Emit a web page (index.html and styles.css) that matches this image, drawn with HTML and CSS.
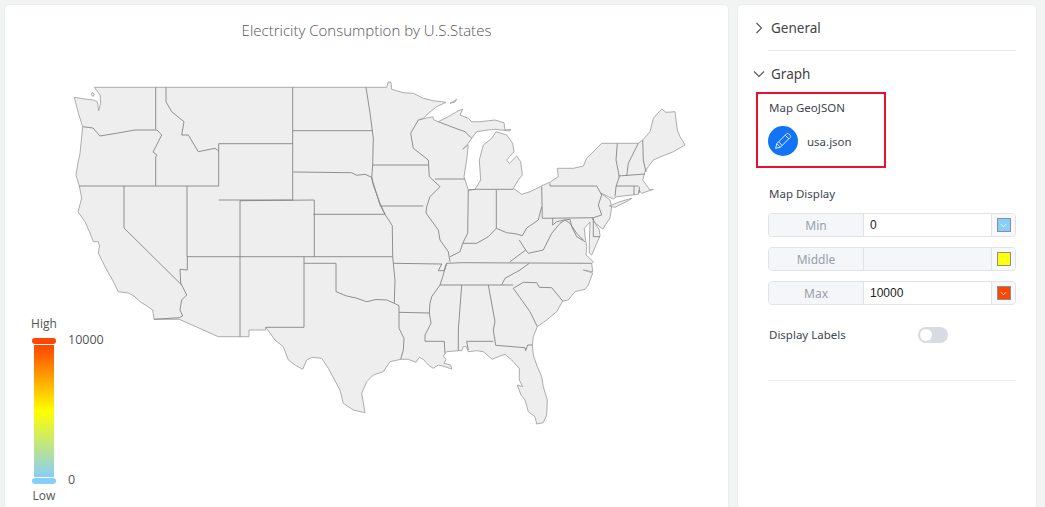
FILE: index.html
```html
<!DOCTYPE html>
<html lang="en">
<head>
<meta charset="utf-8">
<title>Electricity Consumption by U.S.States</title>
<link rel="stylesheet" href="styles.css">
</head>
<body>
<main class="page">
  <section class="chart-card">
    <h1 class="chart-title">Electricity Consumption by U.S.States</h1>
    <svg class="map" viewBox="5 5 723 510" aria-label="Map of the United States">
      <path class="land" d="M94.3 87.3L366 87.3L386.7 87.3L388.3 81.7L391 82.7L391.7 89.3L403.3 92.7L413.3 93.3L423.3 98.3L433.3 100.7L446 102.3L436.7 106.7L428.3 113.3L423.3 118.3L418.3 120L432.7 116.7L434 120L438.3 121.7L448.3 116.7L458.3 110.7L462.7 109.3L460 115L468.3 118.3L471.7 121.7L480 121.7L495 120L504 122.7L505 130L510.7 129.3L510 131L495 129.3L488.3 130L476.7 131.7L471.7 138.3L468.3 143.3L462.7 149.3L468.3 145L466.7 160L464 176.7L468.3 190L475 189.3L480.7 180L479.3 160L483.3 145L491.7 138.3L496 131.7L506.7 135L512.7 143.3L514 151.7L506.7 160L509.3 163.3L516.7 156L520.7 161.7L522.3 175L518.3 180L513.3 188.3L521.7 194.3L530 191.7L541.7 186L550.7 181.7L558.3 176.7L557.3 168.3L573.3 168.3L583.3 166L586.7 158.3L601.7 143.3L638.3 143.3L642.7 140L650 131.7L653.3 118.3L661.7 109L666 112.3L675 111.7L677.3 130L680 136.7L685 145L673.3 151.7L665 155L653.3 160L648.3 166.7L645 171.7L642.7 180L650 190L653.3 189.3L641.7 193.3L639 190L638.3 194.3L616.7 196.7L613.3 199L600.7 193L610 200L611.7 206.7L610 218L602.7 229L595 223L592.3 218.3L599.3 230L600 236L596 245L591.7 255L589.3 253L589.3 241.7L590 222L584.3 228.3L585 236.7L586.7 246.7L586 255L593.3 261.7L591.7 263.3L592.7 271.7L583.3 270L592.7 273L588.3 285L585 289.3L575 291.7L568.3 300L562.7 301L556.7 311.7L546.7 320L537.3 326.7L533.3 336.7L532.3 345L533.3 355L536.7 365L541.7 376.7L543.3 386.7L547.3 400L546.7 415L543.3 422.7L536.7 424L535 416.7L528.3 411.7L525 400L521 395L517.3 385L522.7 386.7L519.3 380L519.3 368.3L511.7 360L505 354.3L498.3 356.7L492.3 359.3L483.3 351.7L476.7 350.7L468.3 351.7L466 346.7L463.3 346.7L461.7 350.7L458.3 350.7L446.7 351.7L443.3 356L446 359.3L444 363.3L450.7 365L451.7 369L445 366.7L438.3 365L433.3 368.3L428.3 365L423.3 359.3L419.3 357.3L416 362.3L408.3 359.3L400.7 359.3L390 361.7L383.3 371.7L373.3 375L366.7 381.7L361.7 393.3L365 412.7L353.3 410L343.3 403.3L340 390L328.3 368.3L321.7 358.3L311.7 357.3L306.7 360L302.7 369.3L296.7 366L288.3 360L283.3 346.7L275 340L265.7 327.3L265.7 330L249 330L249 336.7L218.3 336.7L179.3 319.3L154 319.3L152.7 310L147 306L140 301.7L134 296L128.3 293L118.3 291.7L113 281L105 266.7L98.3 253L99.5 246L98.3 241.7L93.3 241.7L90 233L85 221.7L78 212L81.7 198L79.3 186L76 175L78 163L80 153.3L82.7 126.7L78.3 113L74.3 97.3L85 99L93.3 100L97.3 101.7L98.7 110.7L100.7 103L100 95Z"/>
      <path class="land" d="M609.3 206L620 201.7L631.7 198.3L628.3 200.7L615 207.3Z"/>
      <path class="land" d="M450 103.3L456.7 99.3L455 102Z"/>
      <path class="land" d="M92 92.5L94.5 94L93 96.5L91.5 94.5Z"/>
      <path class="borders" d="M155.7 87.3V129.5M82.7 126.7L93 128L100 136L118 133L135 130L157 130L161.7 135L153 152L157 155L155.7 157V186M79.3 186H218.7M124 186V228L181.7 285M187 186V256.7M187.3 256.7V270L180 269.3L180.7 283L186.7 295L181.7 300L180 310L182.7 316L179.3 317.7L154 319.3M240 200.7V336.7M187 256.7H392.7M304 256.7V327.3H265.7M304 263.3H336V291.7L346.7 296L356 298L366.7 301.7L376 299.5L386.7 300L394.3 303.3L399 305.7M392.7 256.7L393.3 263.3L395 280L394.3 303.3M399 305.7V328.3L404 338.3L403.3 350L400.7 359.3M399 312.3L429.3 313M393.3 263.3L441.7 264L438.3 270.7H444L446.7 263.3L442.7 276.7L440 285L431.7 296.7L430 303.3L429.3 313L431 323.3L425 335V341.3H444.3L445 353.3M446.7 263.3L462.7 262.7L591.7 263.3M440 285H513.3M501.7 285L505 278.3L520 270L529.3 263.3M461.7 285L458.3 330V350.7M488.3 285L495 321.7L493.3 330L495.7 345.3L525 347.7L525.7 350.7L527.7 345H532.3M466.7 341.3H493.3M466.7 341.3L468.3 350M513.3 288.3L530 311.7L537.3 326.7M513.3 288.3L523.3 282.3L536.7 282.7L539.3 287.3L551.7 287.7L562.7 301M366 87.3L370 113L373.3 138L372.7 165M372.7 165H428.3M292.7 87.3V200M292.7 130.7H372.3M218.7 143.7H292.7M218.7 143.7V186M218.7 200H293M293.3 172L351.7 172.7L356.7 175.3L365 174.3L371.7 177.3L373.3 185L380 203.3L385 214.3M313.3 214.3H385M240 200.7L314.3 200V256.7M166 87.3V101.7L171.7 111.7L184 121.7L181.7 135L188.3 135L198.3 151.7L215 148.3L218.7 151M418.3 120L410.7 133.3L413.3 148.3L428.3 160L429.3 176.7L440 186.7L430 196.7L426.7 206.7L426 213L438.3 230L440 240L448.3 251.7L450 261.7M438.3 121.7L452 127L465 131.7L471.7 138.3M435 179H465M380.7 206H423.3M372.7 165L371.7 178L380 205L385 214.3L392.3 225.7L392.7 256.7M468.3 190L467.7 233.3L462.7 243.3L460 251.7L450 256.7M496.3 190V228.3M468.3 190L476.7 189.3L513.3 189.3M541.7 186.7L542.3 218.3M462.7 243.3H476.7L488.3 236.7L496.3 228.3L506.7 232.7L516.7 234L522.3 235.7L526.7 228L538.3 220L541.7 206.7M519.3 240L525.7 250L528.3 253.3L543.3 250L551.7 233.3L560 223.3L565 220L570 223.3L576.7 233.3L583.3 240M525.7 250L510 261.7M552.7 218.3V225L556.7 221.7L564 220L570 219.3L571.7 226.7L576.7 236.7L585 241.7M542.3 218.3L593.3 217.7M550 183.3V186H596.7L601.7 195L598.3 205L601.7 215L593.3 217.7V236.7H600M617.3 143.3L616 160L619.3 176.7L616 186.7L615 196.5M638.3 143.3L628.3 163.3L626.7 176M642.7 140L643.3 160L646 172M618.3 176L645 174M616 186H638.3M634 186V195M639.3 186.7V193"/>
    </svg>
    <div class="legend">
      <span class="legend-end">High</span>
      <div class="legend-scale">
        <div class="scale-column">
          <i class="cap cap-high"></i>
          <i class="ramp"></i>
          <i class="cap cap-low"></i>
        </div>
        <div class="scale-values">
          <span>10000</span>
          <span>0</span>
        </div>
      </div>
      <span class="legend-end">Low</span>
    </div>
  </section>

  <aside class="settings-card">
    <div class="section-head">
      <svg class="chev" viewBox="0 0 12 12"><path d="M3.5 1L8.5 6L3.5 11"/></svg>
      <span>General</span>
    </div>
    <hr class="rule rule-general">
    <div class="section-head section-graph">
      <svg class="chev" viewBox="0 0 12 12"><path d="M1 3.5L6 8.5L11 3.5"/></svg>
      <span>Graph</span>
    </div>
    <div class="highlight">
      <div class="field-label">Map GeoJSON</div>
      <div class="file-row">
        <span class="file-btn">
          <svg viewBox="0 0 18 18"><path d="M1.6 16.4L2.8 11.6L12.6 1.8C13.2 1.2 14 1.2 14.6 1.8L16.2 3.4C16.8 4 16.8 4.8 16.2 5.4L6.4 15.2ZM2.8 11.6L6.4 15.2M11.2 3.2L14.8 6.8M4.6 9.8L8.2 13.4"/></svg>
        </span>
        <span class="file-name">usa.json</span>
      </div>
    </div>
    <div class="field-label display-label">Map Display</div>
    <div class="range-row">
      <span class="range-name">Min</span>
      <span class="range-value">0</span>
      <span class="swatch-box"><span class="swatch swatch-low"><svg viewBox="0 0 8 5"><path d="M1 1L4 4L7 1"/></svg></span></span>
    </div>
    <div class="range-row">
      <span class="range-name">Middle</span>
      <span class="range-value range-off"></span>
      <span class="swatch-box"><span class="swatch swatch-mid"><svg viewBox="0 0 8 5"><path d="M1 1L4 4L7 1"/></svg></span></span>
    </div>
    <div class="range-row">
      <span class="range-name">Max</span>
      <span class="range-value">10000</span>
      <span class="swatch-box"><span class="swatch swatch-high"><svg viewBox="0 0 8 5"><path d="M1 1L4 4L7 1"/></svg></span></span>
    </div>
    <div class="toggle-row">
      <span class="field-label">Display Labels</span>
      <span class="toggle"><i></i></span>
    </div>
    <hr class="rule rule-end">
  </aside>
</main>
</body>
</html>
```
FILE: styles.css
```css
* { box-sizing: border-box; }
html, body { margin: 0; height: 507px; overflow: hidden; background: #f2f3f3; }
.page { display: flex; gap: 8px; padding: 4px 8px 0 4px; height: 530px; font-family: "Noto Sans", sans-serif; }
.chart-card, .settings-card { background: #fff; border: 1px solid #eceded; border-radius: 5px; }
.chart-card { position: relative; width: 725px; flex: none; }
.chart-title { margin: 14px 0 0; text-align: center; font: 300 15px/22px "Open Sans", sans-serif; color: #555; }
.map { position: absolute; left: 0; top: 0; width: 723px; height: 510px; }
.land { fill: #eee; stroke: #999; stroke-width: .8; stroke-linejoin: round; }
.borders { fill: none; stroke: #858585; stroke-width: .9; stroke-linejoin: round; }
.legend { position: absolute; left: 19px; top: 311px; display: flex; flex-direction: column; font: 12px/16px "Open Sans", sans-serif; color: #555; }
.legend-end { width: 40px; text-align: center; }
.legend-scale { display: flex; gap: 12px; margin: 6px 0 4px 8px; height: 146px; }
.scale-column { display: flex; flex-direction: column; align-items: center; width: 24px; }
.cap { display: block; width: 24px; height: 6px; border-radius: 3px; flex: none; }
.cap-high { background: #ff4500; }
.cap-low { background: #87cefa; }
.ramp { display: block; width: 20px; flex: 1; margin: 1px 0; background: linear-gradient(#ff4500, #ffff00 50%, #87cefa); }
.scale-values { display: flex; flex-direction: column; justify-content: space-between; margin: -6px 0 -4px; font-size: 12.5px; }
.settings-card { width: 300px; flex: none; padding: 0 20px 0 30px; }
.section-head { display: flex; align-items: center; height: 20px; margin-top: 13px; margin-left: -15px; gap: 6px; font-size: 13.5px; color: #444; }
.section-graph { margin-top: 13px; }
.section-head .chev { width: 12px; height: 12px; flex: none; }
.chev path { fill: none; stroke: #555; stroke-width: 1.1; }
.rule { margin: 0; border: 0; border-top: 1px solid #e9ebf2; }
.rule-general { margin-top: 12px; }
.rule-end { margin-top: 37px; }
.highlight { width: 130px; height: 76px; margin: 8px 0 0 -12px; padding: 6px 0 0 10px; border: 2px solid #e8112d; }
.field-label { font-size: 11.5px; line-height: 16px; color: #41464f; }
.file-row { display: flex; align-items: center; gap: 9px; margin-top: 10px; }
.file-btn { display: flex; align-items: center; justify-content: center; width: 30px; height: 30px; border-radius: 50%; background: #1373f5; }
.file-btn svg { width: 18px; height: 18px; }
.file-btn path { fill: none; stroke: #e2edff; stroke-width: 1; }
.file-name { font-size: 11.5px; color: #41464f; }
.highlight .field-label { padding-left: 1px; }
.display-label { margin-top: 18px; padding-left: 1px; }
.range-row { display: flex; height: 24px; margin-top: 10px; border: 1px solid #e0e3ea; border-radius: 4px; font-size: 12px; }
.display-label + .range-row { margin-top: 11px; }
.range-name { display: flex; align-items: center; justify-content: center; width: 95px; flex: none; background: #f4f6fa; color: #9a9fa8; border-right: 1px solid #e0e3ea; border-radius: 4px 0 0 4px; }
.range-value { flex: 1; display: flex; align-items: center; padding-left: 6px; color: #222; font-family: "Liberation Sans", sans-serif; font-size: 12px; }
.range-off { background: #f4f6fa; }
.swatch-box { display: flex; align-items: center; justify-content: center; width: 24px; flex: none; border-left: 1px solid #e0e3ea; background: #f7f8fa; border-radius: 0 4px 4px 0; }
.swatch { display: flex; align-items: center; justify-content: center; width: 14px; height: 14px; border: 1px solid #8a8f98; }
.swatch svg { width: 7px; height: 5px; }
.swatch path { fill: none; stroke: #fff; stroke-width: 1; }
.swatch-low { background: #87cefa; }
.swatch-mid { background: #ffff00; }
.swatch-high { background: #ff4500; }
.toggle-row { display: flex; align-items: center; justify-content: space-between; margin-top: 22px; padding: 0 68px 0 1px; height: 16px; }
.toggle { display: block; width: 30px; height: 16px; padding: 2px; border-radius: 8px; background: #d8dbe1; }
.toggle i { display: block; width: 12px; height: 12px; border-radius: 50%; background: #fff; }
```
